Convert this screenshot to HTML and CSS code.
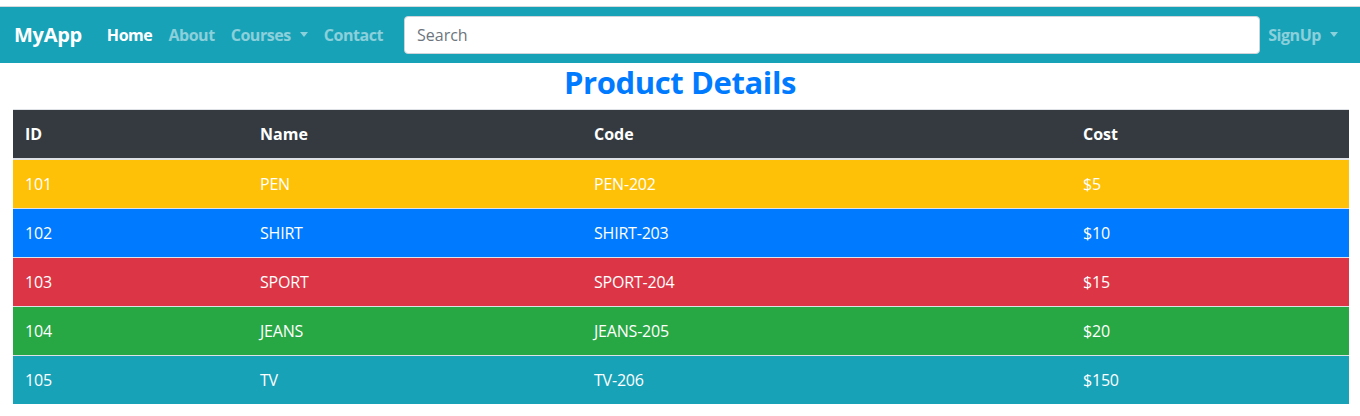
FILE: index.html
```html
<!DOCTYPE html>
<html lang="en">
<head>
<meta charset="utf-8">
<title>MyApp</title>
<link rel="stylesheet" href="styles.css">
</head>
<body>
<div class="page">
  <nav class="navbar">
    <a class="brand" href="#">MyApp</a>
    <ul class="nav">
      <li><a class="nav-link active" href="#">Home</a></li>
      <li><a class="nav-link" href="#">About</a></li>
      <li><a class="nav-link dropdown" href="#">Courses</a></li>
      <li><a class="nav-link" href="#">Contact</a></li>
    </ul>
    <form class="search-form">
      <input class="search" type="text" placeholder="Search">
    </form>
    <a class="nav-link dropdown signup" href="#">SignUp</a>
  </nav>
  <h2 class="title">Product Details</h2>
  <div class="table-wrap">
    <table class="products">
      <colgroup>
        <col class="c1"><col class="c2"><col class="c3"><col class="c4">
      </colgroup>
      <thead>
        <tr><th>ID</th><th>Name</th><th>Code</th><th>Cost</th></tr>
      </thead>
      <tbody>
        <tr class="warning"><td>101</td><td>PEN</td><td>PEN-202</td><td>$5</td></tr>
        <tr class="primary"><td>102</td><td>SHIRT</td><td>SHIRT-203</td><td>$10</td></tr>
        <tr class="danger"><td>103</td><td>SPORT</td><td>SPORT-204</td><td>$15</td></tr>
        <tr class="success"><td>104</td><td>JEANS</td><td>JEANS-205</td><td>$20</td></tr>
        <tr class="info"><td>105</td><td>TV</td><td>TV-206</td><td>$150</td></tr>
      </tbody>
    </table>
  </div>
</div>
</body>
</html>
```

FILE: styles.css
```css
* { box-sizing: border-box; }
html, body { margin: 0; padding: 0; background: #fff; }
body {
  font-family: "Open Sans", "Noto Sans", "Liberation Sans", sans-serif;
  font-size: 16px;
  line-height: 1.5;
  color: #212529;
}
.page {
  padding-top: 6px;
}
.navbar {
  border-top: 1px solid #d5d9dc;
  background: #17a2b8;
  height: 57px;
  padding: 8px 14px 8px 14px;
  display: flex;
  align-items: center;
}
.brand {
  color: #fff;
  font-size: 20px;
  font-weight: 700;
  letter-spacing: -0.3px;
  text-decoration: none;
  margin-right: 17px;
  line-height: 30px;
}
.nav {
  list-style: none;
  margin: 0;
  padding: 0;
  display: flex;
}
.nav-link {
  display: block;
  padding: 8px 8px;
  color: rgba(255, 255, 255, 0.5);
  font-weight: 700;
  letter-spacing: -0.45px;
  text-decoration: none;
  line-height: 24px;
}
.nav-link.active { color: #fff; }
.dropdown::after {
  content: "";
  display: inline-block;
  margin-left: 9px;
  vertical-align: 4px;
  border-top: 5px solid;
  border-left: 4.5px solid transparent;
  border-right: 4.5px solid transparent;
}
.search-form {
  flex: 1;
  margin: 0 0 0 13px;
  display: flex;
}
.search {
  width: 100%;
  height: 38px;
  padding: 6px 12px;
  border: 1px solid #ced4da;
  border-radius: 4px;
  font: inherit;
  font-size: 16px;
  color: #495057;
  background: #fff;
}
.search::placeholder { color: #6c757d; opacity: 1; }
.signup { margin-left: 0; }
.title {
  margin: 0 0 8px;
  text-align: center;
  color: #007bff;
  font-size: 31px;
  font-weight: 700;
  letter-spacing: -0.4px;
  line-height: 38px;
}
.table-wrap {
  padding: 0 11px 0 13px;
}
.products {
  width: 100%;
  border-collapse: collapse;
  table-layout: fixed;
  color: #fff;
}
.c1 { width: 235px; }
.c2 { width: 334px; }
.c3 { width: 489px; }
.c4 { width: 278px; }
.products th,
.products td {
  padding: 12px;
  text-align: left;
  border-top: 1px solid #dee2e6;
  line-height: 24px;
  vertical-align: top;
}
.products th {
  background: #343a40;
  font-weight: 700;
  border-bottom: 2px solid #dee2e6;
}
.products td { font-weight: 400; letter-spacing: -0.2px; }
.warning td { background: #ffc107; }
.primary td { background: #007bff; }
.danger td { background: #dc3545; }
.success td { background: #28a745; }
.info td { background: #17a2b8; }
```
